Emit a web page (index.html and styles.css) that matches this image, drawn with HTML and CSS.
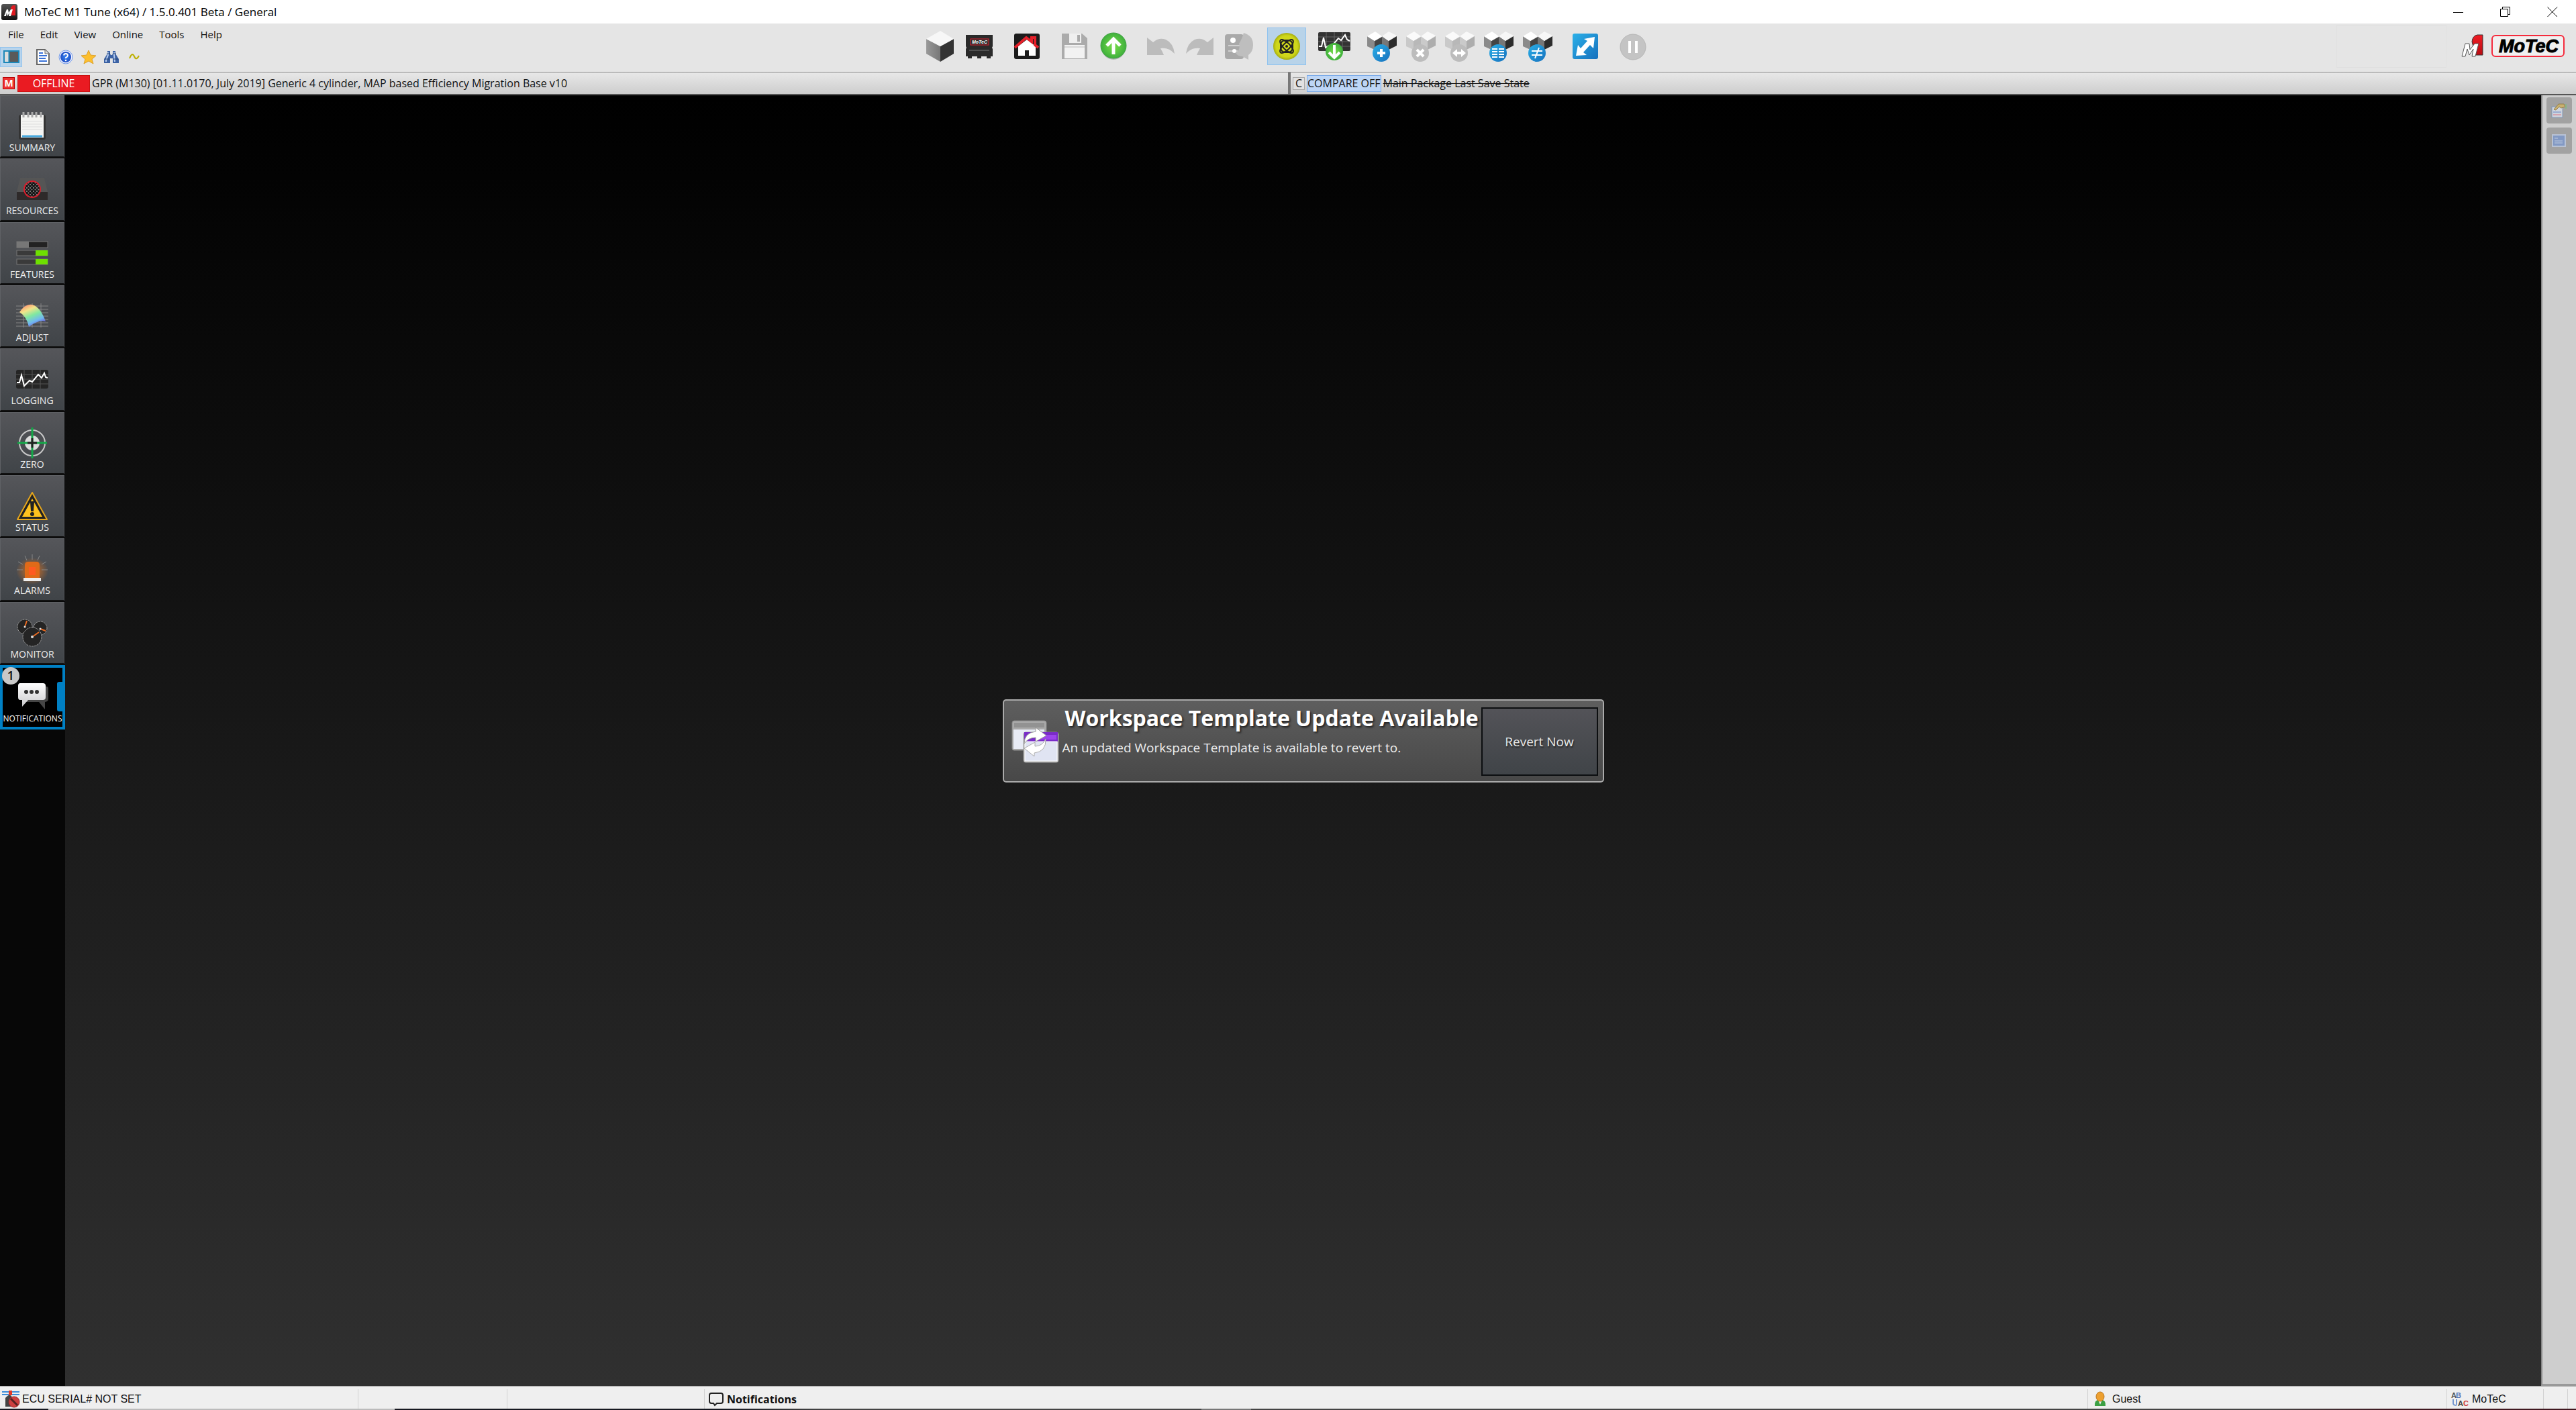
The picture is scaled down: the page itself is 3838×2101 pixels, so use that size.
FILE: index.html
```html
<!DOCTYPE html>
<html lang="en">
<head>
<meta charset="utf-8">
<title>MoTeC M1 Tune (x64) / 1.5.0.401 Beta / General</title>
<link rel="stylesheet" href="styles.css">
</head>
<body>
<svg class="defs" width="0" height="0" aria-hidden="true">
  <defs>
    <linearGradient id="darkV" x1="0" y1="0" x2="0" y2="1"><stop offset="0" stop-color="#555"/><stop offset="1" stop-color="#111"/></linearGradient>
    <linearGradient id="blueV" x1="0" y1="0" x2="1" y2="1"><stop offset="0" stop-color="#2bb0e8"/><stop offset="1" stop-color="#1670bd"/></linearGradient>
    <linearGradient id="redV" x1="0" y1="0" x2="0" y2="1"><stop offset="0" stop-color="#f01c24"/><stop offset="1" stop-color="#b80c12"/></linearGradient>
    <linearGradient id="greyV" x1="0" y1="0" x2="0" y2="1"><stop offset="0" stop-color="#fff"/><stop offset="1" stop-color="#c9c9cc"/></linearGradient>
    <linearGradient id="cubeL" x1="0" y1="0" x2="1" y2="0"><stop offset="0" stop-color="#999"/><stop offset="1" stop-color="#777"/></linearGradient>
    <radialGradient id="atomG"><stop offset="0" stop-color="#d8e01c"/><stop offset=".8" stop-color="#cdd51a"/><stop offset="1" stop-color="#a5ad10"/></radialGradient>
    <radialGradient id="greenG"><stop offset="0" stop-color="#7ade4a"/><stop offset="1" stop-color="#3fb03c"/></radialGradient>
    <radialGradient id="helpG"><stop offset="0" stop-color="#3a86f5"/><stop offset="1" stop-color="#1d4fc4"/></radialGradient>
    <radialGradient id="glow"><stop offset="0" stop-color="#ff7a10" stop-opacity=".8"/><stop offset="1" stop-color="#ff7a10" stop-opacity="0"/></radialGradient>
    <linearGradient id="rainbow" x1=".2" y1="0" x2=".7" y2="1"><stop offset="0" stop-color="#ff8a70"/><stop offset=".25" stop-color="#f2e58a"/><stop offset=".5" stop-color="#80e8a0"/><stop offset=".75" stop-color="#70b8f0"/><stop offset="1" stop-color="#6a3cc8"/></linearGradient>
    <pattern id="mesh" width="5" height="5" patternUnits="userSpaceOnUse"><rect width="5" height="5" fill="#161616"/><circle cx="1" cy="1" r="1" fill="#999"/><circle cx="3.500" cy="3.500" r="1" fill="#888"/></pattern>
    <g id="twoCubes">
      <path d="M0 8L11 15V28L0 23Z" fill="#8a8a8a"/><path d="M11 15L22 9V25L11 28Z" fill="#444"/><path d="M0 8L12 1L22 8L11 15Z" fill="#fff"/>
      <path d="M22 8L32 15V28L22 25Z" fill="#777"/><path d="M32 15L44 8V22L32 28Z" fill="#2c2c2c"/><path d="M22 8L32 1L44 7L32 15Z" fill="#f7f7f7"/>
    </g>
    <g id="twoCubesOff">
      <path d="M0 8L11 15V28L0 23Z" fill="#c9c9c9"/><path d="M11 15L22 9V25L11 28Z" fill="#b8b8b8"/><path d="M0 8L12 1L22 8L11 15Z" fill="#fafafa"/>
      <path d="M22 8L32 15V28L22 25Z" fill="#cacaca"/><path d="M32 15L44 8V22L32 28Z" fill="#adadad"/><path d="M22 8L32 1L44 7L32 15Z" fill="#f9f9f9"/>
    </g>
    <g id="undoArrow"><path d="M0 1L9 8Q18 0 28 4Q39 9 41 25Q32 15 20 17Q23 22 25 27H0Z" fill="#bcbcbc"/></g>
  </defs>
</svg>

<div class="window">
  <header class="titlebar">
    <svg class="app-icon" width="24" height="24" viewBox="0 0 24 24"><rect width="24" height="24" rx="3" fill="url(#darkV)"/><path d="M14 5L17 2H21V17H15Z" fill="#e01a20"/><path d="M4 18L8 8H10L11 13L14 8H17L14 18H11L12 13L9 18L8 13L7 18Z" fill="#fff"/></svg>
    <h1 class="title">MoTeC M1 Tune (x64) / 1.5.0.401 Beta / General</h1>
    <div class="window-controls">
      <button aria-label="Minimize"><svg width="16" height="16"><path d="M0 8.500H15" stroke="#000"/></svg></button>
      <button aria-label="Restore"><svg width="16" height="16" fill="none" stroke="#000"><path d="M.5 3.500H11.500V14.500H.5ZM3.500 3V.5H14.500V11.500H12"/></svg></button>
      <button aria-label="Close"><svg width="16" height="16"><path d="M.5 .5L15 15M15 .5L.5 15" stroke="#000"/></svg></button>
    </div>
  </header>

  <div class="toolbar">
    <div class="toolbar-left">
      <nav class="menu">
        <button>File</button><button>Edit</button><button>View</button><button>Online</button><button>Tools</button><button>Help</button>
      </nav>
      <div class="quick">
        <button class="quick-btn panel-toggle" aria-label="Toggle panel"><svg width="24" height="20"><rect x="1" y="1" width="22" height="17" fill="#5a5a5a" stroke="#1c87b8" stroke-width="2"/><rect x="2" y="2" width="6" height="15" fill="#ddd"/><path d="M8.500 2V17" stroke="#1c87b8" stroke-width="2"/></svg></button>
        <button class="quick-btn" aria-label="Document"><svg width="20" height="24"><path d="M1 1H13L19 7V23H1Z" fill="#fff" stroke="#666" stroke-width="2"/><path d="M13 1V7H19" fill="#ddd" stroke="#666" stroke-width="1"/><path d="M4 6H10M4 10H16M4 14H14M4 18H16" stroke="#3a72d8" stroke-width="2"/></svg></button>
        <button class="quick-btn" aria-label="Help"><svg width="22" height="22"><circle cx="11" cy="11" r="10" fill="#eef" stroke="#6f9ae8" stroke-width="1"/><circle cx="11" cy="11" r="8" fill="url(#helpG)"/><path d="M8 8.500Q8.500 6 11 6Q14 6 14 8.500Q14 10 11 12V13" fill="none" stroke="#fff" stroke-width="2"/><circle cx="11" cy="16" r="1.300" fill="#fff"/></svg></button>
        <button class="quick-btn" aria-label="Favourites"><svg width="24" height="22"><path d="M12 1L15 8L23 9L17 14L19 21L12 17L5 21L7 14L1 9L9 8Z" fill="#fdbf2d" stroke="#dba02a"/></svg></button>
        <button class="quick-btn" aria-label="Find"><svg width="24" height="22"><path d="M6 2H10V6L11 8H13L14 6V2H18V6L23 14V20H14V13H10V20H1V14L6 6Z" fill="#3c62a4"/><path d="M7 4V8L4 16V18M16 4V8L17 18" stroke="#b7cdf0" stroke-width="2" fill="none"/><path d="M5 6H10M14 6H19M2 14H9M15 14H22" stroke="#23406f"/></svg></button>
        <button class="quick-btn" aria-label="Signal"><svg width="16" height="12"><path d="M1 8Q5 -2 8 5T15 4" fill="none" stroke="#bdb000" stroke-width="2"/></svg></button>
      </div>
    </div>

    <div class="tools">
      <div class="tool-group">
        <button class="tool" aria-label="Package"><svg width="42" height="46"><path d="M0 12L21 23V46L0 34Z" fill="url(#cubeL)"/><path d="M21 23L41 12V34L21 46Z" fill="#333"/><path d="M0 12L21 0L41 12L21 23Z" fill="#f7f7f7"/></svg></button>
        <button class="tool" aria-label="ECU"><svg width="42" height="40" viewBox="0 0 42 40"><path d="M1 3H41V20L40 22L41 24V35H38V38H32V35H24V38H18V35H10V38H4V35H1V24L2 22L1 20Z" fill="#2a2a2a"/><rect x="8" y="9" width="27" height="9" fill="none" stroke="#e02030" stroke-width="1"/><text x="10" y="16" font-size="7" font-weight="700" font-style="italic" fill="#fff" font-family="Liberation Sans">MoTeC</text><path d="M6 26H36" stroke="#505050" stroke-width="2"/></svg></button>
      </div>
      <div class="tool-group">
        <button class="tool" aria-label="Home"><svg width="40" height="40"><rect x="1" y="1" width="38" height="38" rx="3" fill="#1c1c1c"/><path d="M7 20L20 10L33 20V34H23V26H17V34H7Z" fill="#fff"/><path d="M2 22L19 7L27 13V7H32V18L37 22" fill="none" stroke="#e5202a" stroke-width="4"/></svg></button>
      </div>
      <div class="tool-group">
        <button class="tool" aria-label="Save" disabled><svg width="40" height="40"><path d="M1 1H31L39 8V39H1Z" fill="#ababab"/><rect x="12" y="1" width="18" height="14" fill="#efefef"/><rect x="24" y="3" width="4" height="10" fill="#aaa"/><rect x="5" y="18" width="30" height="20" fill="#f2f2f2"/><path d="M5 21H35" stroke="#bbb" stroke-width="1"/></svg></button>
        <button class="tool" aria-label="Upload"><svg width="40" height="42"><ellipse cx="20" cy="22" rx="18" ry="19" fill="#000" opacity=".2"/><circle cx="20" cy="20" r="19" fill="url(#greenG)" stroke="#3fa043"/><path d="M20 33V10M10 20L20 10L30 20" fill="none" stroke="#fff" stroke-width="5"/></svg></button>
      </div>
      <div class="tool-group">
        <button class="tool" aria-label="Undo" disabled><svg width="42" height="28"><use href="#undoArrow"/></svg></button>
        <button class="tool" aria-label="Redo" disabled><svg width="42" height="28"><use href="#undoArrow" transform="translate(41 0) scale(-1 1)"/></svg></button>
        <button class="tool" aria-label="Comments" disabled><svg width="44" height="42"><rect x="1" y="3" width="28" height="37" rx="4" fill="#a9a9a9"/><path d="M6 20H26M6 28H20" stroke="#d0d0d0" stroke-width="2"/><path d="M29 1Q43 5 43 19Q43 29 36 34V41L27 36Q20 36 17 31Q25 26 22 17Q26 11 29 1Z" fill="#bebebe"/><circle cx="13" cy="12" r="4" fill="#fff"/><circle cx="15" cy="28" r="3" fill="#fff"/></svg></button>
      </div>
      <div class="tool-group">
        <button class="tool tool-on" aria-label="Live mode" aria-pressed="true"><svg width="40" height="42"><circle cx="20" cy="21" r="20" fill="url(#atomG)"/><g fill="none" stroke="#222" stroke-width="2"><ellipse cx="20" cy="21" rx="5" ry="13" transform="rotate(45 20 21)"/><ellipse cx="20" cy="21" rx="5" ry="13" transform="rotate(-45 20 21)"/><rect x="11" y="12" width="18" height="18" rx="7"/></g><circle cx="20" cy="21" r="2" fill="#222"/></svg></button>
      </div>
      <div class="tool-group">
        <button class="tool" aria-label="Download log"><svg width="48" height="44"><rect x="0" y="1" width="48" height="28" rx="2" fill="#333"/><path d="M0 8H48M0 15H48M0 22H48M12 1V29M24 1V29M36 1V29" stroke="#666"/><path d="M1 22H5L8 9L11 24L16 21L20 22L30 10L34 13L40 5L43 12L47 14" fill="none" stroke="#fff" stroke-width="2"/><circle cx="24" cy="30" r="13" fill="url(#greenG)"/><path d="M24 20V38M16 31L24 39L32 31" fill="none" stroke="#fff" stroke-width="4"/></svg></button>
      </div>
      <div class="tool-group">
        <button class="tool" aria-label="Add comparison"><svg width="44" height="46"><use href="#twoCubes"/><circle cx="21" cy="33" r="13" fill="url(#blueV)"/><path d="M21 27V39M15 33H27" stroke="#fff" stroke-width="4"/></svg></button>
        <button class="tool" aria-label="Remove comparison" disabled><svg width="44" height="46"><use href="#twoCubesOff"/><circle cx="21" cy="33" r="13" fill="#bcbcbc"/><path d="M16 28L26 38M26 28L16 38" stroke="#fff" stroke-width="4"/></svg></button>
        <button class="tool" aria-label="Swap comparison" disabled><svg width="44" height="46"><use href="#twoCubesOff"/><circle cx="21" cy="33" r="13" fill="#bcbcbc"/><path d="M11 33L18 27V31H24V27L31 33L24 39V35H18V39Z" fill="#fff"/></svg></button>
        <button class="tool" aria-label="Comparison list"><svg width="44" height="46"><use href="#twoCubes"/><circle cx="21" cy="33" r="13" fill="url(#blueV)"/><path d="M12 27H20M12 31H20M12 35H20M12 39H20M22 27H30M22 31H30M22 35H30M22 39H30" stroke="#fff" stroke-width="2"/></svg></button>
        <button class="tool" aria-label="Show differences"><svg width="44" height="46"><use href="#twoCubes"/><circle cx="21" cy="33" r="13" fill="url(#blueV)"/><path d="M13 30H29M13 36H29M24 25L18 41" stroke="#fff" stroke-width="2"/></svg></button>
      </div>
      <div class="tool-group">
        <button class="tool" aria-label="Expand"><svg width="40" height="40"><rect x="1" y="1" width="38" height="38" rx="3" fill="url(#blueV)"/><path d="M34 6L32 23L27 18L17 29L22 33L6 34L9 18L13 23L23 12L18 9Z" fill="#fff"/></svg></button>
      </div>
      <div class="tool-group">
        <button class="tool" aria-label="Pause" disabled><svg width="40" height="42"><circle cx="20" cy="22" r="19" fill="#c4c4c4" stroke="#b5b5b5"/><path d="M15 13V31M25 13V31" stroke="#fff" stroke-width="4"/></svg></button>
      </div>
    </div>

    <div class="brand">
      <div class="empty-slot"></div>
      <svg width="34" height="36"><path d="M16 11Q17 2 24 1H32V31H21Z" fill="url(#redV)" stroke="#333"/><path d="M1 33L6 14H12L13 23L20 14H26L21 33H16L18 22L12 31L9 22L6 33Z" fill="#fff" stroke="#555"/></svg>
      <svg width="112" height="36"><rect x="2" y="2" width="107" height="31" rx="5" fill="#f0f0f0" stroke="#f52a3c" stroke-width="2"/><text x="12" y="27" font-family="Liberation Sans" font-size="27" font-weight="700" font-style="italic" stroke="#000">MoTeC</text></svg>
    </div>
  </div>

  <div class="package-bar">
    <section class="package main-package">
      <span class="m-badge">M</span>
      <span class="offline">OFFLINE</span>
      <span>GPR (M130) [01.11.0170, July 2019] Generic 4 cylinder, MAP based Efficiency Migration Base v10</span>
    </section>
    <section class="package compare-package">
      <span class="c-badge">C</span>
      <span class="compare-off">COMPARE OFF</span>
      <s>Main Package Last Save State</s>
    </section>
  </div>

  <div class="body">
    <nav class="sidebar">
      <div class="side-list">
      <button class="side-btn"><svg width="48" height="46"><rect x="4" y="6" width="40" height="37" rx="3" fill="#333"/><path d="M7 6H41V40H7Z" fill="#f4f4f2"/><path d="M9 16H39M9 20H39M9 24H39M9 28H39" stroke="#ddd"/><path d="M9 38H39" stroke="#48a8dc" stroke-width="3"/><path d="M11 2V10M18 2V10M24 2V10M30 2V10M37 2V10" stroke="#aaa" stroke-width="3"/></svg><span>SUMMARY</span></button>
      <button class="side-btn"><svg width="48" height="46"><path d="M6 6H42L47 27V39H1V27Z" fill="#555"/><path d="M1 27H47V39H1Z" fill="#2e2a2a"/><circle cx="24" cy="23" r="12" fill="url(#mesh)" stroke="#d81e2c" stroke-width="2"/></svg><span>RESOURCES</span></button>
      <button class="side-btn"><svg width="48" height="46"><g stroke="#777"><rect x="1" y="6" width="46" height="9" fill="#222"/><rect x="1" y="19" width="46" height="8" fill="#3a3a3a"/><rect x="1" y="32" width="46" height="8" fill="#3a3a3a"/></g><rect x="1" y="6" width="18" height="9" fill="#777"/><rect x="29" y="19" width="18" height="8" fill="#6ee000"/><rect x="29" y="32" width="18" height="8" fill="#6ee000"/></svg><span>FEATURES</span></button>
      <button class="side-btn"><svg width="48" height="46"><path d="M0 8H48M0 13H48M0 18H48M0 23H48M0 28H48M0 33H48M0 38H48M11 4V40M24 4V40M37 4V40" stroke="#858585"/><path d="M5 17Q14 4 24 6Q36 9 44 31Q34 28 19 39Q16 24 5 17Z" fill="url(#rainbow)"/></svg><span>ADJUST</span></button>
      <button class="side-btn"><svg width="48" height="46"><rect x="0" y="9" width="48" height="28" rx="3" fill="#252525"/><path d="M0 16H48M0 23H48M0 30H48M12 9V37M24 9V37M36 9V37" stroke="#555"/><path d="M1 28H5L8 17L12 33L20 25L24 27L33 16L38 21L42 14L44 20L47 21" fill="none" stroke="#fff" stroke-width="2"/></svg><span>LOGGING</span></button>
      <button class="side-btn"><svg width="48" height="46"><circle cx="24" cy="23" r="19" fill="none" stroke="#c8c8c8" stroke-width="2"/><circle cx="24" cy="23" r="11" fill="#ddd"/><path d="M24 0V46M2 23H46" stroke="#14a848" stroke-width="3"/><path d="M24 16V30M17 23H31" stroke="#222" stroke-width="3"/></svg><span>ZERO</span></button>
      <button class="side-btn"><svg width="48" height="46"><path d="M24 3L46 43H2Z" fill="#222" stroke="#e6a61c" stroke-width="2" stroke-linejoin="round"/><path d="M24 12L39 39H9Z" fill="#fec11e"/><path d="M22 17H26L25 30H23Z" fill="#222" stroke="#222" stroke-width="2"/><circle cx="24" cy="35" r="3" fill="#222"/></svg><span>STATUS</span></button>
      <button class="side-btn"><svg width="48" height="46"><ellipse cx="24" cy="26" rx="24" ry="20" fill="url(#glow)"/><path d="M24 1V9M13 3L16 10M35 3L32 10M3 12L10 16M45 12L38 16M1 24H10M47 24H38" stroke="#888" stroke-width="1"/><path d="M13 37V17Q13 12 18 12H30Q35 12 35 17V37Z" fill="#e06a18"/><rect x="19" y="20" width="10" height="12" fill="#ff5a20"/><rect x="11" y="36" width="26" height="5" fill="#eee"/></svg><span>ALARMS</span></button>
      <button class="side-btn"><svg width="48" height="46"><g fill="#242424" stroke="#999" stroke-dasharray="3 1"><circle cx="13" cy="14" r="11"/><circle cx="36" cy="16" r="10"/><circle cx="24" cy="29" r="14"/></g><path d="M13 14L16 5M36 17L44 20M24 29L34 22" stroke="#e86a20" stroke-width="2"/><circle cx="13" cy="14" r="1.500" fill="#ddd"/><circle cx="36" cy="17" r="1.500" fill="#ddd"/><circle cx="24" cy="29" r="2" fill="#ddd"/></svg><span>MONITOR</span></button>
      <button class="side-btn active"><i class="count">1</i><svg width="48" height="46"><path d="M12 10H44Q47 10 47 13V29Q47 32 42 33V44L33 33H12Z" fill="#454545"/><path d="M5 5H39Q43 5 43 9V26Q43 30 39 30H17L8 40V30H5Q2 30 2 26V9Q2 5 5 5Z" fill="url(#greyV)"/><circle cx="14" cy="18" r="3" fill="#333"/><circle cx="22" cy="18" r="3" fill="#333"/><circle cx="30" cy="18" r="3" fill="#333"/></svg><span>NOTIFICATIONS</span></button>
      </div>
    </nav>

    <main class="workspace">
      <article class="banner">
        <svg class="banner-icon" width="72" height="68"><rect x="2" y="2" width="51" height="44" rx="3" fill="#aaa" stroke="#888"/><rect x="5" y="5" width="45" height="7" fill="#929292"/><rect x="4" y="15" width="46" height="29" fill="#e8ebf5"/><rect x="19" y="19" width="52" height="45" rx="3" fill="#bbb" stroke="#999"/><rect x="20" y="19" width="50" height="14" fill="#7a2cc8"/><rect x="42" y="23" width="26" height="7" fill="#9c44ec"/><rect x="21" y="33" width="48" height="29" fill="#e0e4f2" stroke="#fff"/><path d="M20 36Q20 20 37 18V12L53 24L37 33V27Q26 27 20 36Z" fill="#fff" stroke="#999"/><path d="M52 29Q53 48 35 50V55L20 43L36 34V40Q47 40 52 29Z" fill="#fff" stroke="#aaa"/></svg>
        <div class="banner-text">
          <h2>Workspace Template Update Available</h2>
          <p>An updated Workspace Template is available to revert to.</p>
        </div>
        <button class="revert">Revert Now</button>
      </article>
    </main>

    <aside class="rail">
      <button class="rail-btn" aria-label="Properties"><svg width="24" height="24"><rect x="1" y="6" width="16" height="16" fill="#cfd5de" stroke="#8298b8"/><path d="M3 14H15" stroke="#6684c4"/><path d="M3 18H15" stroke="#d87080"/><path d="M4 10L11 2H19L21 6L15 8L12 6L7 11Z" fill="#c8b070" stroke="#927c48"/><path d="M21 2H23V9H21Z" fill="#88b488"/></svg></button>
      <button class="rail-btn" aria-label="List"><svg width="24" height="24"><rect x="2" y="3" width="19" height="17" fill="#8299c4" stroke="#b8c2d4" stroke-width="2"/><path d="M5 8H10M5 12H17M5 15H17" stroke="#c0cce0" stroke-width="1"/></svg></button>
    </aside>
  </div>

  <footer class="status">
    <div class="cell cell-ecu"><svg width="28" height="28"><path d="M0 3H26M0 7H26" stroke="#3c8cd8" stroke-width="2"/><path d="M10 1H15V8H10Z" fill="#e03828"/><path d="M5 12Q12 4 15 11L13 25H5Z" fill="#444"/><circle cx="18" cy="18" r="8" fill="#cc4040" stroke="#982828"/><path d="M13 13L23 23" stroke="#552222" stroke-width="3"/></svg><span>ECU SERIAL# NOT SET</span></div>
    <div class="cell cell-a"></div>
    <div class="cell cell-b"></div>
    <div class="cell cell-note"><svg width="22" height="22"><path d="M4 2H18Q21 2 21 5V14Q21 17 18 17H12L9 20L7 17H4Q1 17 1 14V5Q1 2 4 2Z" fill="#eee" stroke="#222" stroke-width="2"/></svg><strong>Notifications</strong></div>
    <div class="cell cell-user"><svg width="18" height="24"><path d="M1 22Q0 12 9 13Q18 12 17 22Z" fill="#3ca044"/><path d="M6 13L9 20L12 13Z" fill="#eee"/><ellipse cx="9" cy="8" rx="6" ry="7" fill="#eda030" stroke="#b8741c"/></svg><span>Guest</span></div>
    <div class="cell cell-lang"><svg width="26" height="24" font-family="Liberation Sans" font-size="11" font-weight="700"><text x="0" y="10" fill="#555">A</text><text x="7" y="10" fill="#5878b8">B</text><text x="10" y="22" fill="#444">A</text><text x="18" y="22" fill="#cc4040">C</text><path d="M3 12V18Q3 21 8 21M8 12V20" stroke="#7898d0" stroke-width="2" fill="none"/></svg><span>MoTeC</span></div>
    <div class="cell cell-c"></div>
    <div class="cell cell-d"></div>
  </footer>
  <div class="taskbar"><span class="search"></span><span class="task"></span></div>
</div>
</body>
</html>
```
FILE: styles.css
```css
* { box-sizing: border-box; }
body { margin: 0; font-family: "Open Sans", "Noto Sans", sans-serif; font-size: 16px; color: #111; }
button { margin: 0; padding: 0; border: 0; background: none; font: inherit; color: inherit; }
svg { display: block; flex: none; }
.defs { position: absolute; }
.window { display: flex; flex-direction: column; height: 100vh; overflow: hidden; background: #e5e5e5; }

.titlebar { display: flex; align-items: center; flex: none; height: 35px; padding-left: 2px; background: #fff; }
.title { margin: 0 auto 0 10px; font-size: 17px; line-height: 24px; font-weight: 400; color: #000; }
.window-controls { display: flex; }
.window-controls button { display: flex; align-items: center; justify-content: center; width: 70px; height: 34px; }

.toolbar { display: grid; grid-template-columns: 1fr auto 1fr; flex: none; height: 72px; background: #e5e5e5; }
.menu { display: flex; gap: 24px; padding: 4px 0 0 12px; height: 35px; line-height: 24px; font-size: 15px; }
.menu button { height: 24px; }
.quick { display: flex; align-items: center; height: 30px; gap: 1px; }
.quick-btn { display: flex; align-items: center; justify-content: center; width: 33px; height: 30px; }
.panel-toggle { margin-right: 13px; background: #b8d4ec; border: 1px solid #93c4ee; }
.tools { display: flex; gap: 13px; height: 68px; margin-right: 4px; align-items: center; }
.tool-group { display: flex; }
.tool { display: flex; align-items: center; justify-content: center; width: 58px; height: 56px; }
.tool-on { background: #b8d3e9; border: 1px solid #8ec2ef; }
.brand { display: flex; justify-content: flex-end; align-items: center; height: 68px; padding-right: 15px; gap: 10px; }
.empty-slot { width: 164px; height: 64px; margin-right: 12px; border: 1px solid #e0e0e0; }

.package-bar { display: grid; grid-template-columns: 1fr 1fr; flex: none; height: 35px; border-top: 1px solid #888; border-bottom: 2px solid #555; background: linear-gradient(#e8e8e8, #cdcdcd); }
.package { display: flex; align-items: center; gap: 3px; padding-left: 4px; font-size: 16px; line-height: 23px; white-space: nowrap; }
.compare-package { padding-left: 3px; border-left: 4px solid #777; }
.m-badge { width: 18px; height: 18px; margin-right: 1px; border: 1px solid #b00; background: #e33; color: #fff; font-weight: 700; font-size: 14px; line-height: 16px; text-align: center; }
.offline { width: 108px; height: 25px; border: 1px solid #c11; background: #ea1b22; color: #fff; text-align: center; }
.c-badge { width: 18px; height: 19px; border: 1px solid #aaa; background: #e2e2e2; line-height: 17px; text-align: center; }
.compare-off { height: 25px; border: 1px solid #7cabe8; background: #bdd6f6; }

.body { display: flex; flex: 1; min-height: 0; }
.sidebar { width: 97px; flex: none; background: #070707; }
.side-list { display: grid; grid-template-rows: repeat(10, 1fr); height: 945px; }
.side-btn { position: relative; display: flex; flex-direction: column; align-items: center; width: 96px; padding-top: 22px; border: 1px solid #5f6165; border-bottom: 2px solid #111; background: linear-gradient(#55565a, #404448); color: #eee; font-size: 14px; line-height: 18px; margin-bottom: 1px; }
.side-btn.active { width: 97px; padding-top: 18px; margin-bottom: 0; border: 4px solid #0080c4; background: #000; color: #fff; font-size: 12px; line-height: 24px; }
.side-btn.active::after { content: ""; position: absolute; right: -4px; top: 21px; width: 12px; height: 44px; border-radius: 3px 0 0 3px; background: #0080c4; }
.count { position: absolute; left: -1px; top: -1px; width: 26px; height: 26px; border-radius: 50%; background: #c8c8c8; color: #111; font-size: 18px; font-style: normal; font-weight: 600; line-height: 24px; text-align: center; }
.workspace { display: flex; align-items: center; justify-content: center; flex: 1; background: linear-gradient(#000, #303030); }
.rail { display: flex; flex-direction: column; gap: 6px; flex: none; width: 52px; padding: 3px 0 0 6px; border-left: 2px solid #888; border-bottom: 3px solid #999; background: #cecece; }
.rail-btn { display: flex; align-items: center; justify-content: center; width: 38px; height: 39px; border-radius: 4px; background: #a2a2a2; }

.banner { display: flex; width: 896px; height: 124px; padding: 10px 7px 8px 10px; border: 2px solid #aaa; border-radius: 5px; background: linear-gradient(#5e5e5e, #484848); color: #fff; }
.banner-icon { margin-top: 18px; }
.banner-text { flex: 1; padding-left: 5px; }
.banner h2 { margin: 0 0 0 4px; font-size: 32px; line-height: 32px; font-weight: 700; white-space: nowrap; text-shadow: 2px 2px 3px #222; }
.banner p { margin: 14px 0 0; font-size: 19px; line-height: 28px; color: #eee; }
.revert { width: 174px; height: 102px; border: 2px solid #0c0e10; background: linear-gradient(#535358, #404448); color: #e8e8e8; font-size: 19px; text-shadow: 1px 2px 2px #222; }

.status { display: flex; flex: none; height: 34px; padding-top: 4px; border-top: 1px solid #999; background: #efefef; font-family: "Liberation Sans", Arial, sans-serif; font-size: 16px; line-height: 24px; }
.status strong { font-family: "Open Sans", "Noto Sans", sans-serif; }
.cell { display: flex; align-items: center; gap: 5px; padding-left: 6px; border-right: 1px solid #d2d2d2; white-space: nowrap; }
.cell-ecu { width: 534px; padding-left: 3px; gap: 2px; }
.cell-a { width: 222px; }
.cell-b { width: 294px; }
.cell-note { flex: 1; }
.cell-user { width: 535px; padding-left: 9px; gap: 9px; }
.cell-lang { width: 144px; }
.cell-c { width: 36px; }
.cell-d { width: 12px; border: 0; }
.taskbar { display: flex; flex: none; height: 2px; padding-left: 72px; background: linear-gradient(90deg, #161820 28%, #444 32%, #444 88%, #401820 93%); }
.search { width: 516px; background: #bbb; }
.task { width: 74px; margin-left: 1202px; background: #777; }
```
